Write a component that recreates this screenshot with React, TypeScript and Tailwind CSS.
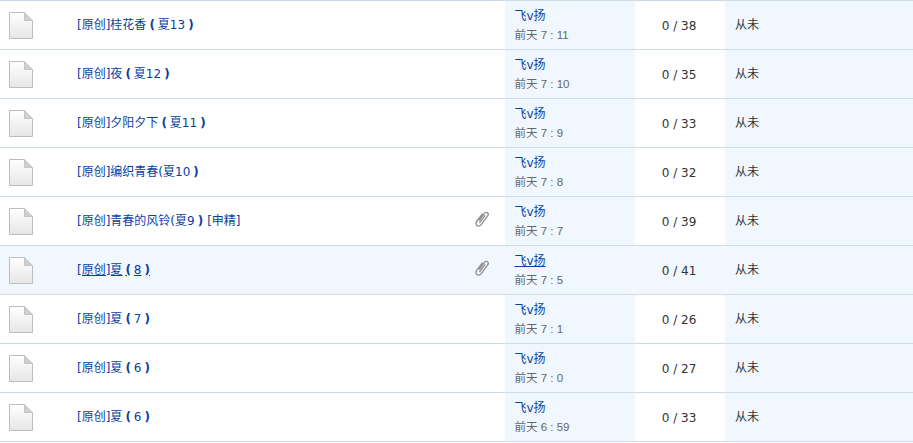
const rows = [
  { t: "[原创]桂花香 ( 夏13 )", d: "前天 7 : 11", c: "0 / 38" },
  { t: "[原创]夜 ( 夏12 )", d: "前天 7 : 10", c: "0 / 35" },
  { t: "[原创]夕阳夕下 ( 夏11 )", d: "前天 7 : 9", c: "0 / 33" },
  { t: "[原创]编织青春(夏10 )", d: "前天 7 : 8", c: "0 / 32" },
  { t: "[原创]青春的风铃(夏9 )", d: "前天 7 : 7", c: "0 / 39", clip: true, extra: "[申精]" },
  { t: "[原创]夏 ( 8 )", d: "前天 7 : 5", c: "0 / 41", clip: true, hover: true },
  { t: "[原创]夏 ( 7 )", d: "前天 7 : 1", c: "0 / 26" },
  { t: "[原创]夏 ( 6 )", d: "前天 7 : 0", c: "0 / 27" },
  { t: "[原创]夏 ( 6 )", d: "前天 6 : 59", c: "0 / 33" },
];

function Title({ text }: { text: string }) {
  const parts = text.split(/( \( | \))/);
  return (
    <>
      {parts.map((p, i) =>
        p === " ( " ? (
          <b key={i} className="mx-[3px] font-bold">(</b>
        ) : p === " )" ? (
          <b key={i} className="ml-[3px] font-bold">)</b>
        ) : (
          <span key={i}>{p}</span>
        )
      )}
    </>
  );
}

function FileIcon() {
  return (
    <svg width="24" height="27" viewBox="0 0 24 27" className="shrink-0">
      <defs>
        <linearGradient id="pg" x1="0" y1="0" x2="0" y2="1">
          <stop offset="0" stopColor="#ffffff" />
          <stop offset="1" stopColor="#e6e6e6" />
        </linearGradient>
      </defs>
      <path d="M0.5 0.5H15.5L23.5 8.5V26.5H0.5Z" fill="url(#pg)" stroke="#bdbdbd" />
      <path d="M15.5 0.5V8.5H23.5Z" fill="#d0d0d0" stroke="#c4c4c4" />
    </svg>
  );
}

function Clip() {
  return (
    <svg width="14" height="16" viewBox="0 0 14 16" fill="none" stroke="#8f8f8f" strokeWidth="1.3" className="mb-[4px] shrink-0">
      <path d="M4.2 9.5 L9.2 2.6 C10.2 1.2 11.8 1 12.6 1.8 C13.5 2.6 13.4 4 12.5 5.2 L6.2 13.6 C5 15.2 3 15.5 1.9 14.5 C0.7 13.5 0.8 11.6 2 10 L7.6 2.6" />
      <path d="M4.4 12 L10.2 4.4" />
    </svg>
  );
}

export default function App() {
  return (
    <div className="h-[443px] w-[913px] overflow-hidden border-t border-[#cfdce8] bg-white text-[12px] leading-[19px]" style={{ fontFamily: '"DejaVu Sans", "Noto Sans CJK SC", sans-serif' }}>
      {rows.map((r, i) => (
        <div key={i} className={`flex h-[49px] border-b border-[#cfdce8] ${r.hover ? "bg-[#f0f7fe]" : "bg-white"}`}>
          <div className="flex w-[505px] items-center">
            <div className="flex w-[77px] pl-[9px]"><FileIcon /></div>
            <div className="flex flex-1 items-center gap-[4px] pr-[16px] text-[#0b3f9e]">
              <span className={r.hover ? "underline" : ""}><Title text={r.t} /></span>
              {r.extra && <span>{r.extra}</span>}
              <span className="flex-1" />
              {r.clip && <Clip />}
            </div>
          </div>
          <div className="flex w-[130px] flex-col justify-center bg-[#f0f7fe] pt-[1px] pl-[9.5px]">
            <span className={`text-[#0b3f9e] ${r.hover ? "underline" : ""}`}>飞v扬</span>
            <span className="text-[11.5px] text-[#666666]" style={{ fontFamily: '"Liberation Sans", "Noto Sans CJK SC", sans-serif' }}>{r.d}</span>
          </div>
          <div className="flex w-[90px] items-center justify-center pt-[2px] pr-[2px] text-[#333333]">{r.c}</div>
          <div className="flex flex-1 items-center bg-[#f0f7fe] pl-[10px] pt-[1px] text-[#333333]">从未</div>
        </div>
      ))}
    </div>
  );
}
